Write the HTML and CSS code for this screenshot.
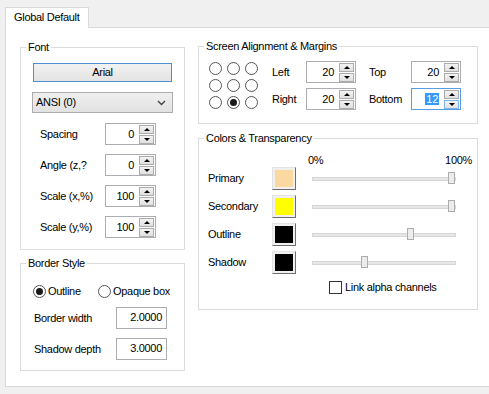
FILE: index.html
```html
<!DOCTYPE html>
<html lang="en">
  <head>
    <meta charset="UTF-8" />
    <title>Global Default</title>
    <link rel="stylesheet" href="styles.css">
  </head>
  <body>
    <div class="tabs">
      <div class="tab">Global Default</div>
    </div>
    <div class="panel">
      <!-- Left column -->
      <div class="col-left">
        <fieldset class="group">
          <legend>Font</legend>
          <div class="font-body">
            <div class="btn">Arial</div>
            <div class="select">
              <span>ANSI (0)</span>
              <svg width="9" height="6" viewBox="0 0 9 6"><path d="M1 1 L4.5 4.5 L8 1" fill="none" stroke="#444" stroke-width="1.4"/></svg>
            </div>
            <div class="spin-row">
              <span class="lbl">Spacing</span>
              <div class="spin"><span class="val">0</span><span class="arrows"><span class="up"></span><span class="down"></span></span></div>
            </div>
            <div class="spin-row">
              <span class="lbl">Angle (z,?</span>
              <div class="spin"><span class="val">0</span><span class="arrows"><span class="up"></span><span class="down"></span></span></div>
            </div>
            <div class="spin-row">
              <span class="lbl">Scale (x,%)</span>
              <div class="spin"><span class="val">100</span><span class="arrows"><span class="up"></span><span class="down"></span></span></div>
            </div>
            <div class="spin-row">
              <span class="lbl">Scale (y,%)</span>
              <div class="spin"><span class="val">100</span><span class="arrows"><span class="up"></span><span class="down"></span></span></div>
            </div>
          </div>
        </fieldset>

        <fieldset class="group">
          <legend>Border Style</legend>
          <div class="border-body">
            <div class="radio-row">
              <span class="radio-item first"><span class="radio checked"></span>Outline</span>
              <span class="radio-item"><span class="radio"></span>Opaque box</span>
            </div>
            <div class="edit-row">
              <span class="lbl-wide">Border width</span>
              <div class="edit">2.0000</div>
            </div>
            <div class="edit-row">
              <span class="lbl-wide">Shadow depth</span>
              <div class="edit">3.0000</div>
            </div>
          </div>
        </fieldset>
      </div>

      <!-- Right column -->
      <div class="col-right">
        <fieldset class="group">
          <legend>Screen Alignment &amp; Margins</legend>
          <div class="align-body">
            <div class="align-grid">
              <span class="radio"></span><span class="radio"></span><span class="radio"></span>
              <span class="radio"></span><span class="radio"></span><span class="radio"></span>
              <span class="radio"></span><span class="radio checked"></span><span class="radio"></span>
            </div>
            <div class="margins">
              <span class="m-lbl">Left</span>
              <div class="spin"><span class="val">20</span><span class="arrows"><span class="up"></span><span class="down"></span></span></div>
              <span class="m-lbl m-right">Top</span>
              <div class="spin"><span class="val">20</span><span class="arrows"><span class="up"></span><span class="down"></span></span></div>
              <span class="m-lbl">Right</span>
              <div class="spin"><span class="val">20</span><span class="arrows"><span class="up"></span><span class="down"></span></span></div>
              <span class="m-lbl m-right">Bottom</span>
              <div class="spin focus"><span class="val"><span class="sel">12</span></span><span class="arrows"><span class="up"></span><span class="down"></span></span></div>
            </div>
          </div>
        </fieldset>

        <fieldset class="group">
          <legend>Colors &amp; Transparency</legend>
          <div class="colors-body">
            <div class="scale"><span>0%</span><span>100%</span></div>
            <div class="color-row">
              <span class="c-lbl">Primary</span>
              <span class="swatch"><span style="background: #fbd8a0"></span></span>
              <div class="slider"><div class="track"></div><div class="thumb" style="left: 136px"></div></div>
            </div>
            <div class="color-row">
              <span class="c-lbl">Secondary</span>
              <span class="swatch"><span style="background: #ffff00"></span></span>
              <div class="slider"><div class="track"></div><div class="thumb" style="left: 136px"></div></div>
            </div>
            <div class="color-row">
              <span class="c-lbl">Outline</span>
              <span class="swatch"><span style="background: #000000"></span></span>
              <div class="slider"><div class="track"></div><div class="thumb" style="left: 95px"></div></div>
            </div>
            <div class="color-row">
              <span class="c-lbl">Shadow</span>
              <span class="swatch"><span style="background: #000000"></span></span>
              <div class="slider"><div class="track"></div><div class="thumb" style="left: 49px"></div></div>
            </div>
            <div class="check-row">
              <span class="check"></span>Link alpha channels
            </div>
          </div>
        </fieldset>
      </div>
    </div>
  </body>
</html>
```

FILE: styles.css
```css
* {
  box-sizing: border-box;
}

body {
  margin: 0;
  width: 489px;
  height: 394px;
  overflow: hidden;
  background: #f0f0f0;
  color: #000;
  font-family: "Liberation Sans", Arial, sans-serif;
  font-size: 11px;
  line-height: 13px;
  letter-spacing: -0.3px;
}

/* Tab strip */
.tabs {
  display: flex;
  padding: 7px 0 0 5px;
}

.tab {
  position: relative;
  z-index: 1;
  width: 84px;
  height: 21px;
  margin-bottom: -1px;
  padding: 3px 0 0 8px;
  background: #fff;
  border: 1px solid #d9d9d9;
  border-bottom: none;
}

.panel {
  display: flex;
  align-items: flex-start;
  gap: 13px;
  width: 484px;
  height: 360px;
  margin-left: 5px;
  padding: 13px 0 0 14px;
  background: #fff;
  border: 1px solid #d9d9d9;
  border-right: none;
}

.col-left {
  display: flex;
  flex-direction: column;
  gap: 7px;
  width: 165px;
}

.col-right {
  display: flex;
  flex-direction: column;
  gap: 8px;
  width: 280px;
  margin-top: -1px;
}

/* Group boxes */
.group {
  margin: 0;
  padding: 0;
  min-width: 0;
  border: 1px solid #dcdcdc;
}

.group legend {
  margin-left: 5px;
  padding: 0 2px;
  line-height: 13px;
}

/* Font group */
.font-body {
  display: flex;
  flex-direction: column;
  padding: 9px 11px 11px 12px;
}

.btn {
  width: 139px;
  height: 19px;
  line-height: 17px;
  text-align: center;
  background: linear-gradient(#f2f2f2, #e3e3e3);
  border: 1px solid #4d8fd0;
}

.select {
  display: flex;
  align-items: center;
  justify-content: space-between;
  width: 141px;
  height: 21px;
  margin: 10px 0 0 -1px;
  padding: 0 6px 0 3px;
  background: linear-gradient(#efefef, #e2e2e2);
  border: 1px solid #acacac;
}

.spin-row {
  display: flex;
  align-items: center;
  height: 22px;
  margin-top: 9px;
  padding-left: 7px;
}

.select + .spin-row {
  margin-top: 10px;
}

.lbl {
  width: 65px;
}

/* Spin edit */
.spin {
  display: flex;
  align-items: center;
  justify-content: flex-end;
  width: 51px;
  height: 22px;
  padding-right: 1px;
  background: #fff;
  border: 1px solid #abadb3;
}

.val {
  padding-right: 5px;
}

.arrows {
  display: flex;
  flex-direction: column;
  gap: 1px;
  width: 15px;
}

.arrows span {
  position: relative;
  height: 9px;
  background: linear-gradient(#f3f3f3, #e0e0e0);
  border: 1px solid #acacac;
}

.arrows span::after {
  content: "";
  position: absolute;
  left: 4px;
  top: 2px;
  border-left: 3px solid transparent;
  border-right: 3px solid transparent;
}

.arrows .up::after {
  border-bottom: 3px solid #000;
}

.arrows .down::after {
  border-top: 3px solid #000;
}

.spin.focus {
  border-color: #569de5;
}

.spin.focus .down {
  border-color: #7eb4ea;
}

.sel {
  padding: 0 1px;
  background: #3399ff;
  color: #fff;
}

/* Border style group */
.border-body {
  display: flex;
  flex-direction: column;
  gap: 9px;
  padding: 15px 0 10px 12px;
}

.radio-row {
  display: flex;
  height: 13px;
}

.radio-item {
  display: flex;
  align-items: center;
  gap: 2px;
}

.radio-item.first {
  width: 65px;
}

.radio {
  position: relative;
  display: block;
  width: 13px;
  height: 13px;
  border: 1px solid #555;
  border-radius: 50%;
  background: #fff;
}

.radio.checked::after {
  content: "";
  position: absolute;
  left: 2px;
  top: 2px;
  width: 7px;
  height: 7px;
  border-radius: 50%;
  background: #1a1a1a;
}

.edit-row {
  display: flex;
  align-items: center;
  padding-left: 1px;
}

.lbl-wide {
  width: 82px;
}

.edit {
  width: 51px;
  height: 22px;
  padding-right: 4px;
  line-height: 18px;
  text-align: right;
  border: 1px solid #abadb3;
}

/* Alignment group */
.align-body {
  display: flex;
  align-items: flex-start;
  gap: 14px;
  padding: 8px 0 13px 10px;
}

.align-grid {
  display: grid;
  grid-template-columns: repeat(3, 13px);
  column-gap: 5px;
  row-gap: 4px;
  margin-top: 1px;
}

.margins {
  display: grid;
  grid-template-columns: 34px 50px 55px 50px;
  row-gap: 5px;
  align-items: center;
}

.m-right {
  margin-left: 13px;
}

.margins .spin {
  width: 50px;
}

/* Colors group */
.colors-body {
  display: flex;
  flex-direction: column;
  padding: 9px 5px 15px 9px;
}

.scale {
  display: flex;
  justify-content: space-between;
  margin-left: 100px;
}

.color-row {
  display: flex;
  align-items: center;
  height: 23px;
  margin-bottom: 5px;
}

.c-lbl {
  width: 64px;
}

.swatch {
  display: flex;
  width: 24px;
  height: 23px;
  padding: 2px;
  background: #f0f0f0;
  border: 1px solid;
  border-color: #e3e3e3 #6d6d6d #6d6d6d #e3e3e3;
}

.swatch span {
  flex: 1;
}

.slider {
  position: relative;
  display: flex;
  align-items: center;
  width: 144px;
  height: 23px;
  margin-left: 16px;
}

.track {
  width: 100%;
  height: 4px;
  background: #e7e7e7;
  border: 1px solid #d6d6d6;
}

.thumb {
  position: absolute;
  top: 5px;
  width: 7px;
  height: 12px;
  background: #ececec;
  border: 1px solid #adadad;
}

.check-row {
  display: flex;
  align-items: center;
  gap: 3px;
  height: 13px;
  margin: 2px 0 0 121px;
}

.check {
  width: 13px;
  height: 13px;
  border: 1px solid #333;
  background: #fff;
}
```
